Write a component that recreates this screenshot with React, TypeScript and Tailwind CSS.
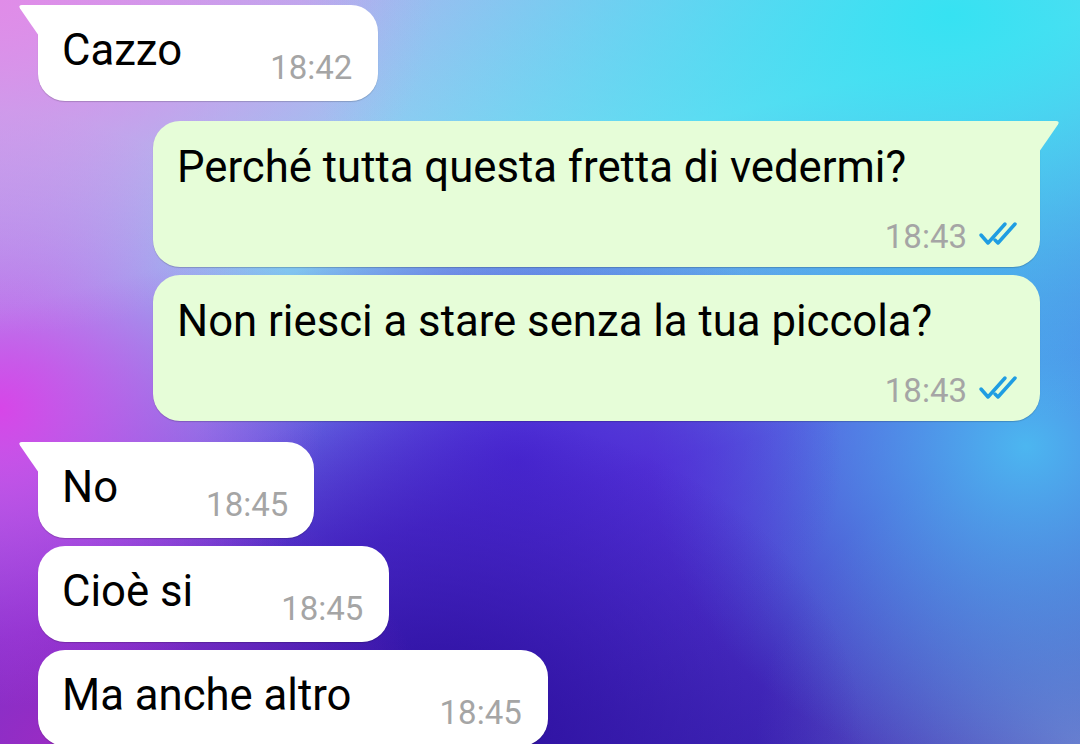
import clsx from "clsx";

function TailLeft() {
  return (
    <svg
      className="absolute -left-5 top-0"
      width="21"
      height="32"
      viewBox="0 0 21 32"
      fill="#ffffff"
    >
      <path d="M21 0 H4 Q0 0 2 3.5 L21 31 Z" />
    </svg>
  );
}

function TailRight() {
  return (
    <svg
      className="absolute -right-5 top-0"
      width="21"
      height="32"
      viewBox="0 0 21 32"
      fill="#e6fdd8"
    >
      <path d="M0 0 H17 Q21 0 19 3.5 L0 31 Z" />
    </svg>
  );
}

function DoubleCheck() {
  return (
    <svg
      className="-mt-[6px]"
      width="40"
      height="26"
      viewBox="0 0 40 26"
      fill="none"
      stroke="#1f9de2"
      strokeWidth="3.5"
      strokeLinecap="round"
      strokeLinejoin="round"
    >
      <path d="M4 14 L11 22 L28 3" />
      <path d="M18 19 L21 22 L38 3" />
    </svg>
  );
}

function Incoming({
  text,
  time,
  tail,
  className,
}: {
  text: string;
  time: string;
  tail?: boolean;
  className?: string;
}) {
  return (
    <div
      className={clsx(
        "relative ml-[38px] self-start flex items-start rounded-[27px] bg-white pl-6 pr-[26px] pt-5 pb-[15px] shadow-[0_1px_1px_rgba(0,0,0,0.18)]",
        tail && "rounded-tl-none",
        className
      )}
    >
      {tail && <TailLeft />}
      <span className="text-[43.7px] leading-[50px] text-black">{text}</span>
      <span className="ml-[88px] mt-[25px] text-[33px] leading-9 text-[#a5a5a5]">
        {time}
      </span>
    </div>
  );
}

function Outgoing({
  text,
  time,
  tail,
  className,
}: {
  text: string;
  time: string;
  tail?: boolean;
  className?: string;
}) {
  return (
    <div
      className={clsx(
        "relative mr-10 w-[887px] self-end flex flex-col rounded-[27px] bg-[#e6fdd8] pl-6 pr-[23px] pt-[21px] pb-3 shadow-[0_1px_1px_rgba(0,0,0,0.18)]",
        tail && "rounded-tr-none",
        className
      )}
    >
      {tail && <TailRight />}
      <span className="text-[43.7px] leading-[50px] text-black">{text}</span>
      <div className="mt-[27px] flex items-center justify-end gap-[10px]">
        <span className="text-[33px] leading-9 text-[#a5a5a5]">{time}</span>
        <DoubleCheck />
      </div>
    </div>
  );
}

export default function App() {
  return (
    <div
      className="relative h-[744px] w-[1080px] overflow-hidden [background-image:radial-gradient(ellipse_60%_55%_at_88%_2%,#36e2f2_0%,rgba(54,226,242,0)_100%),radial-gradient(ellipse_40%_45%_at_0%_0%,#e08ce8_0%,rgba(224,140,232,0)_100%),radial-gradient(ellipse_30%_40%_at_0%_55%,#d746e8_0%,rgba(215,70,232,0)_100%),radial-gradient(ellipse_35%_40%_at_5%_100%,#9a2cc4_0%,rgba(154,44,196,0)_100%),radial-gradient(ellipse_40%_45%_at_40%_100%,#2a0c9c_0%,rgba(42,12,156,0)_100%),radial-gradient(ellipse_30%_35%_at_48%_62%,#4a28d4_0%,rgba(74,40,212,0)_100%),radial-gradient(ellipse_35%_45%_at_95%_60%,#4cb6f0_0%,rgba(76,182,240,0)_100%),radial-gradient(ellipse_30%_40%_at_100%_100%,#6a78cc_0%,rgba(106,120,204,0)_100%),linear-gradient(165deg,#c4a4ee_0%,#86d6f2_30%,#5a3ad8_62%,#3a24b0_100%)] [font-family:Roboto,'Liberation_Sans',sans-serif]"
    >
      <div className="flex flex-col pt-[5px]">
        <Incoming text="Cazzo" time="18:42" tail />
        <Outgoing
          text="Perché tutta questa fretta di vedermi?"
          time="18:43"
          tail
          className="mt-5"
        />
        <Outgoing
          text="Non riesci a stare senza la tua piccola?"
          time="18:43"
          className="mt-2"
        />
        <Incoming text="No" time="18:45" tail className="mt-[21px]" />
        <Incoming text="Cioè si" time="18:45" className="mt-2" />
        <Incoming text="Ma anche altro" time="18:45" className="mt-2" />
      </div>
    </div>
  );
}
